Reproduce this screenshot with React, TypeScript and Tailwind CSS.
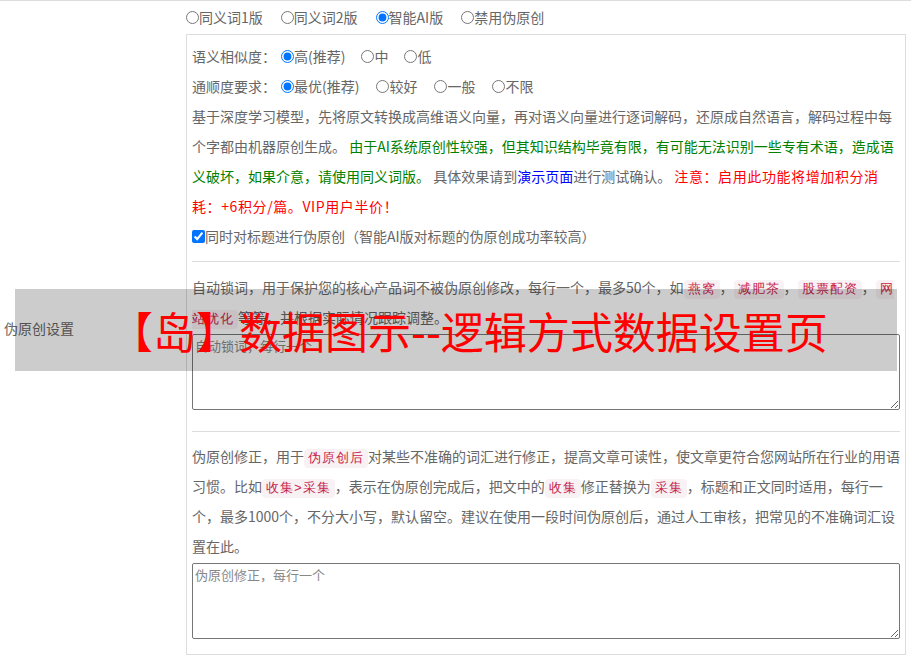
import React from 'react';

const FONT = { fontFamily: '"Noto Sans CJK SC", "Noto Sans", sans-serif' };

function Radio({ label, checked, name }: { label: string; checked?: boolean; name: string }) {
  return (
    <label className="inline-flex items-center">
      <input type="radio" name={name} defaultChecked={checked} className="m-0 w-[13px] h-[13px]" />
      <span>{label}</span>
    </label>
  );
}

function Code({ children }: { children: React.ReactNode }) {
  return (
    <code className="bg-[#f9f2f4] text-[#c7254e] text-[13px] leading-[18px] tracking-[1px] px-[4px] py-[2px] rounded-[4px]">
      {children}
    </code>
  );
}

export default function App() {
  return (
    <div
      className="relative w-[911px] h-[658px] bg-white text-[#666] text-[14px] overflow-hidden border-t border-[#ddd]"
      style={FONT}
    >
      <div className="flex items-center">
        <div className="w-[186px] shrink-0 pl-[4px]">伪原创设置</div>

        <div className="flex-1 pr-[5px]">
          <div className="flex items-center gap-[18px] h-[33px]">
            <Radio name="mode" label="同义词1版" />
            <Radio name="mode" label="同义词2版" />
            <Radio name="mode" label="智能AI版" checked />
            <Radio name="mode" label="禁用伪原创" />
          </div>

          <div className="border border-[#ddd] px-[5px] pt-[6px] pb-[15px]">
            <div className="flex items-center h-[30px]">
              <span className="w-[89px]">语义相似度：</span>
              <div className="flex items-center gap-[16px]">
                <Radio name="sim" label="高(推荐)" checked />
                <Radio name="sim" label="中" />
                <Radio name="sim" label="低" />
              </div>
            </div>
            <div className="flex items-center h-[30px]">
              <span className="w-[89px]">通顺度要求：</span>
              <div className="flex items-center gap-[17px]">
                <Radio name="flu" label="最优(推荐)" checked />
                <Radio name="flu" label="较好" />
                <Radio name="flu" label="一般" />
                <Radio name="flu" label="不限" />
              </div>
            </div>
            <p className="leading-[30px]">
              基于深度学习模型，先将原文转换成高维语义向量，再对语义向量进行逐词解码，还原成自然语言，解码过程中每个字都由机器原创生成。{' '}
              <span className="text-[#008000]">
                由于AI系统原创性较强，但其知识结构毕竟有限，有可能无法识别一些专有术语，造成语义破坏，如果介意，请使用同义词版。
              </span>{' '}
              具体效果请到<span className="text-[#0000ff]">演示页面</span>进行测试确认。{' '}
              <span className="text-[#ff0000] tracking-[0.6px]">注意：启用此功能将增加积分消耗：+6积分/篇。VIP用户半价！</span>
            </p>
            <label className="flex items-center h-[30px]">
              <input type="checkbox" defaultChecked className="m-0 w-[13px] h-[13px]" />
              <span>同时对标题进行伪原创（智能AI版对标题的伪原创成功率较高）</span>
            </label>

            <div className="border-t border-[#ddd] mt-[10px] pt-[10px]">
              <p className="leading-[30px]">
                自动锁词，用于保护您的核心产品词不被伪原创修改，每行一个，最多50个，如<Code>燕窝</Code>，<Code>减肥茶</Code>，<Code>股票配资</Code>，<Code>网站优化</Code>等等，并根据实际情况跟踪调整。
              </p>
              <textarea
                placeholder="自动锁词，每行一个"
                className="block w-full h-[76px] mt-[2px] border border-[#767676] rounded-[2px] px-[2px] py-[1px] text-[13px] placeholder:text-[#888] resize-y"
              />
            </div>

            <div className="border-t border-[#ddd] mt-[21px] pt-[9px]">
              <p className="leading-[30px]">
                伪原创修正，用于<Code>伪原创后</Code>对某些不准确的词汇进行修正，提高文章可读性，使文章更符合您网站所在行业的用语习惯。比如<Code>收集&gt;采集</Code>，表示在伪原创完成后，把文中的<Code>收集</Code>修正替换为<Code>采集</Code>，标题和正文同时适用，每行一个，最多1000个，不分大小写，默认留空。建议在使用一段时间伪原创后，通过人工审核，把常见的不准确词汇设置在此。
              </p>
              <textarea
                placeholder="伪原创修正，每行一个"
                className="block w-full h-[76px] mt-[2px] border border-[#767676] rounded-[2px] px-[2px] py-[1px] text-[13px] placeholder:text-[#888] resize-y"
              />
            </div>
          </div>
        </div>
      </div>

      <div className="absolute left-[15px] top-[288px] w-[882px] h-[82px] bg-black/20 flex items-center pl-[95px]">
        <span className="text-[#ff0000] text-[43px] leading-none">【岛】数据图示--逻辑方式数据设置页</span>
      </div>
    </div>
  );
}
